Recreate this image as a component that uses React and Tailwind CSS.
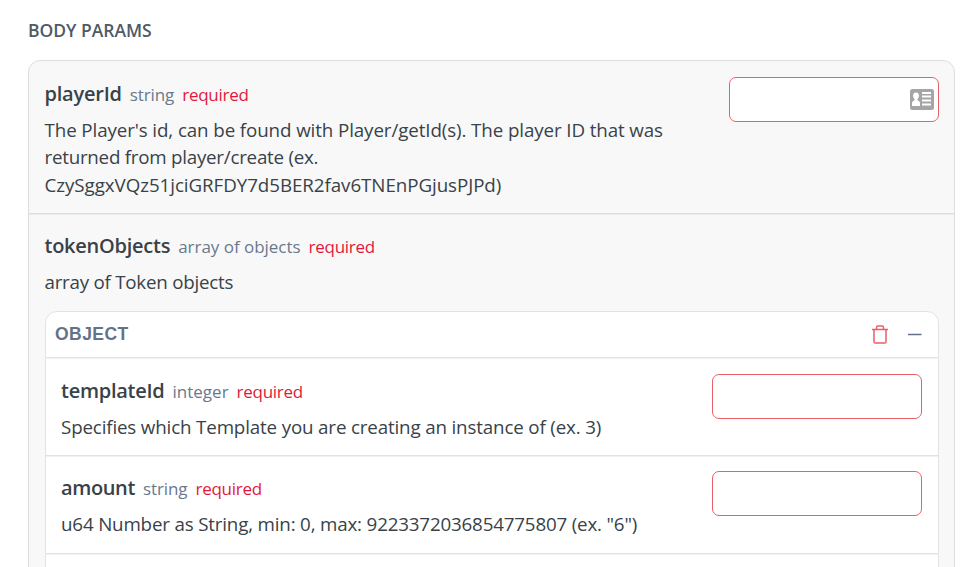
function Param({ name, nameCls, type, typeCls, input, icon, children }) {
  return (
    <div className="flex items-start justify-between">
      <div className="w-[640px] shrink-0 whitespace-nowrap">
        <div className="flex h-[39px] items-baseline gap-2 pt-[3px] leading-[28px]">
          <span className={`text-[20px] font-semibold text-[#384248] ${nameCls}`}>{name}</span>
          <span className={`text-[17px] text-[#6a788d] ${typeCls}`}>{type}</span>
          <span className="text-[17px] tracking-[-0.27px] text-[#e2183b]">required</span>
        </div>
        <div className="text-[18.75px] leading-[27px] text-[#384248]">{children}</div>
      </div>
      {input && (
        <div className="flex h-[45px] w-[210px] items-center justify-end rounded-[7px] border border-[#e95f6a] bg-white pr-1">
          {icon}
        </div>
      )}
    </div>
  );
}

function ContactIcon() {
  return (
    <svg width="24" height="21" viewBox="0 0 24 21" className="shrink-0">
      <rect width="24" height="21" rx="2.5" fill="#a5a5a5" />
      <ellipse cx="6" cy="6.8" rx="2.9" ry="3.4" fill="#fff" />
      <path d="M4.600 9h2.800v2.200c1.700.5 2.600 1.500 2.600 3.300V17H2v-2.500c0-1.800.9-2.800 2.600-3.300z" fill="#fff" />
      <path d="M12 4h9M12 7.500h9M12 11.500h9M12 15.500h9" stroke="#fff" strokeWidth="2" />
    </svg>
  );
}

export default function App() {
  return (
    <div className="h-[567px] overflow-hidden bg-white pl-7 pr-3 pt-[17px] font-['Open_Sans','Noto_Sans',sans-serif]">
      <h2 className="h-[43px] text-[17.5px] font-semibold leading-[27px] tracking-[-0.02px] text-[#4f5a66]">BODY PARAMS</h2>
      <div className="h-[540px] w-[927px] rounded-[12px] border border-[#dedede] bg-[#f8f8f8]">
        <div className="h-[153px] border-b border-b-[#dedede] px-[15.5px] pt-4 shadow-[0_1px_0_#ececec]">
          <Param name="playerId" nameCls="tracking-[-0.22px]" type="string" typeCls="tracking-[-0.1px]" input icon={<ContactIcon />}>
            <div className="tracking-[-0.1px]">The Player's id, can be found with Player/getId(s). The player ID that was</div>
            <div className="tracking-[-0.24px]">returned from player/create (ex.</div>
            <div className="pt-px tracking-[-0.06px]">CzySggxVQz51jciGRFDY7d5BER2fav6TNEnPGjusPJPd)</div>
          </Param>
        </div>
        <div className="pl-[15.5px] pr-4 pt-[15px]">
          <Param name="tokenObjects" nameCls="tracking-[-0.25px]" type="array of objects" typeCls="tracking-[-0.03px]">
            <div className="tracking-[-0.24px]">array of Token objects</div>
          </Param>
          <div className="ml-[0.5px] mt-4 h-[300px] w-[894px] rounded-[12px] border border-[#e3e3e3] bg-white">
            <div className="flex h-[46px] items-center justify-between border-b border-b-[#e2e2e2] pb-px pl-[9px] pr-4 shadow-[0_1px_0_#f2f2f2]">
              <span className="font-['Liberation_Sans',Arial,sans-serif] text-[17.5px] font-bold leading-[20px] tracking-[0.45px] text-[#637288]">OBJECT</span>
              <span className="flex items-center gap-[19px]">
                <svg width="18" height="20" viewBox="0 0 18 20" fill="none" stroke="#e95f6a" strokeWidth="1.500">
                  <path d="M1 5.500h16M5.500 5.200V3.500Q5.500 2 7 2h4q1.500 0 1.500 1.500v1.700M3 5.500v12.200Q3 19 4.300 19h9.400q1.300 0 1.300-1.300V5.500" />
                </svg>
                <svg width="14" height="20" viewBox="0 0 14 20"><path d="M0 10.500h13.500" stroke="#637288" strokeWidth="1.500" /></svg>
              </span>
            </div>
            <div className="h-[98px] border-b border-b-[#e2e2e2] pl-[15px] pr-4 pt-4 shadow-[0_1px_0_#f2f2f2]">
              <Param name="templateId" nameCls="tracking-[-0.26px]" type="integer" typeCls="" input>
                <div className="tracking-[-0.15px]">Specifies which Template you are creating an instance of (ex. 3)</div>
              </Param>
            </div>
            <div className="h-[98px] border-b border-b-[#e2e2e2] pl-[15px] pr-4 pt-[15px] shadow-[0_1px_0_#f2f2f2]">
              <Param name="amount" nameCls="tracking-[-0.37px]" type="string" typeCls="tracking-[-0.1px]" input>
                <div className="tracking-[-0.17px]">u64 Number as String, min: 0, max: 9223372036854775807 (ex. "6")</div>
              </Param>
            </div>
          </div>
        </div>
      </div>
    </div>
  );
}
